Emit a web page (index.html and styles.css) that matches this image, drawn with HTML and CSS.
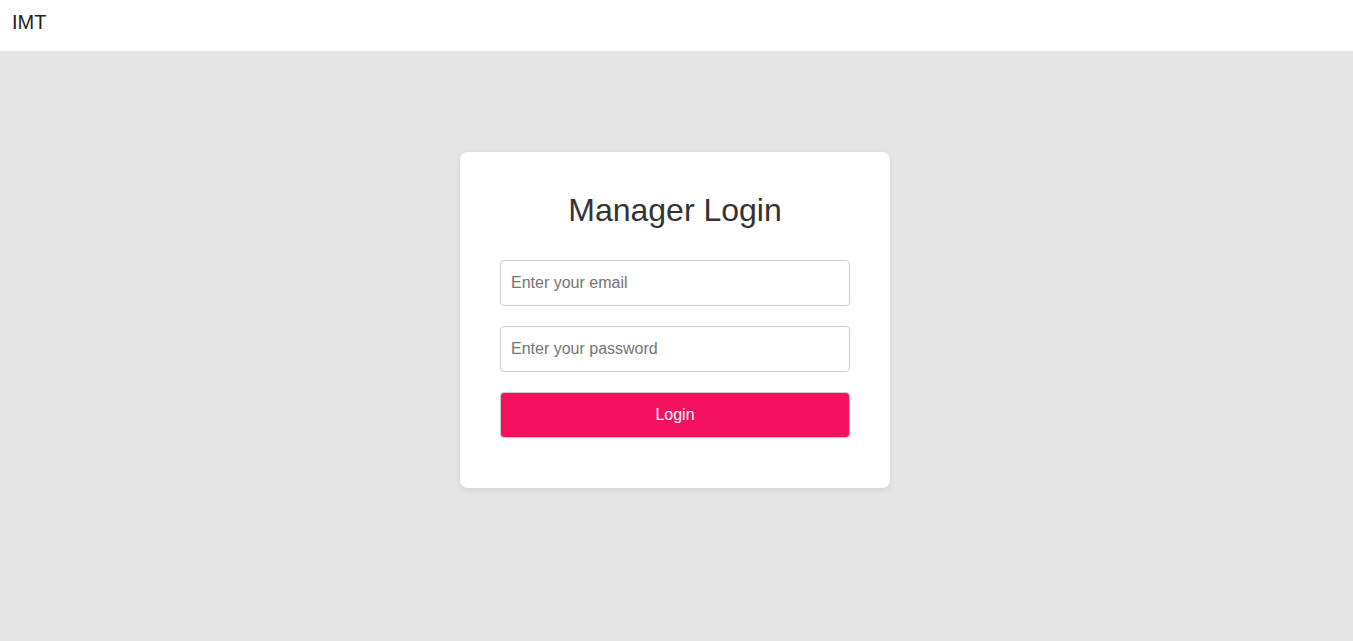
FILE: index.html
```html
<!DOCTYPE html>
<html>
<head>
<meta charset="utf-8">
<link rel="stylesheet" href="styles.css">
</head>
<body>
<header class="topbar"><span class="brand">IMT</span></header>
<main class="main">
  <form class="card">
    <h2 class="title">Manager Login</h2>
    <input class="field" type="email" placeholder="Enter your email">
    <input class="field" type="password" placeholder="Enter your password">
    <button class="btn" type="button">Login</button>
  </form>
</main>
</body>
</html>
```
FILE: styles.css
```css
html, body { margin: 0; padding: 0; }
body {
  font-family: "Liberation Sans", Arial, sans-serif;
  background: #e5e5e5;
  height: 641px;
}
.topbar {
  height: 51px;
  background: #fff;
  display: flex;
  align-items: center;
  padding: 0 12px;
  box-sizing: border-box;
}
.brand {
  font-size: 20px;
  color: #222;
  margin-top: -6px;
}
.main {
  display: flex;
  justify-content: center;
  padding-top: 101px;
  padding-right: 3px;
}
.card {
  width: 430px;
  box-sizing: border-box;
  background: #fff;
  border-radius: 8px;
  box-shadow: 0 2px 6px rgba(0,0,0,0.08);
  padding: 40px 40px 50px;
  display: flex;
  flex-direction: column;
  gap: 20px;
}
.title {
  margin: 0 0 12px;
  font-weight: normal;
  font-size: 32px;
  line-height: 36px;
  color: #333;
  text-align: center;
}
.field {
  height: 46px;
  box-sizing: border-box;
  border: 1px solid #ccc;
  border-radius: 4px;
  padding: 0 10px;
  font-family: "Liberation Sans", Arial, sans-serif;
  font-size: 16px;
  color: #333;
  outline: none;
}
.field::placeholder { color: #757575; }
.btn {
  height: 46px;
  border: 1px solid #ccc;
  border-radius: 4px;
  background: #f41160;
  color: #fff;
  font-family: "Liberation Sans", Arial, sans-serif;
  font-size: 16px;
}
```
